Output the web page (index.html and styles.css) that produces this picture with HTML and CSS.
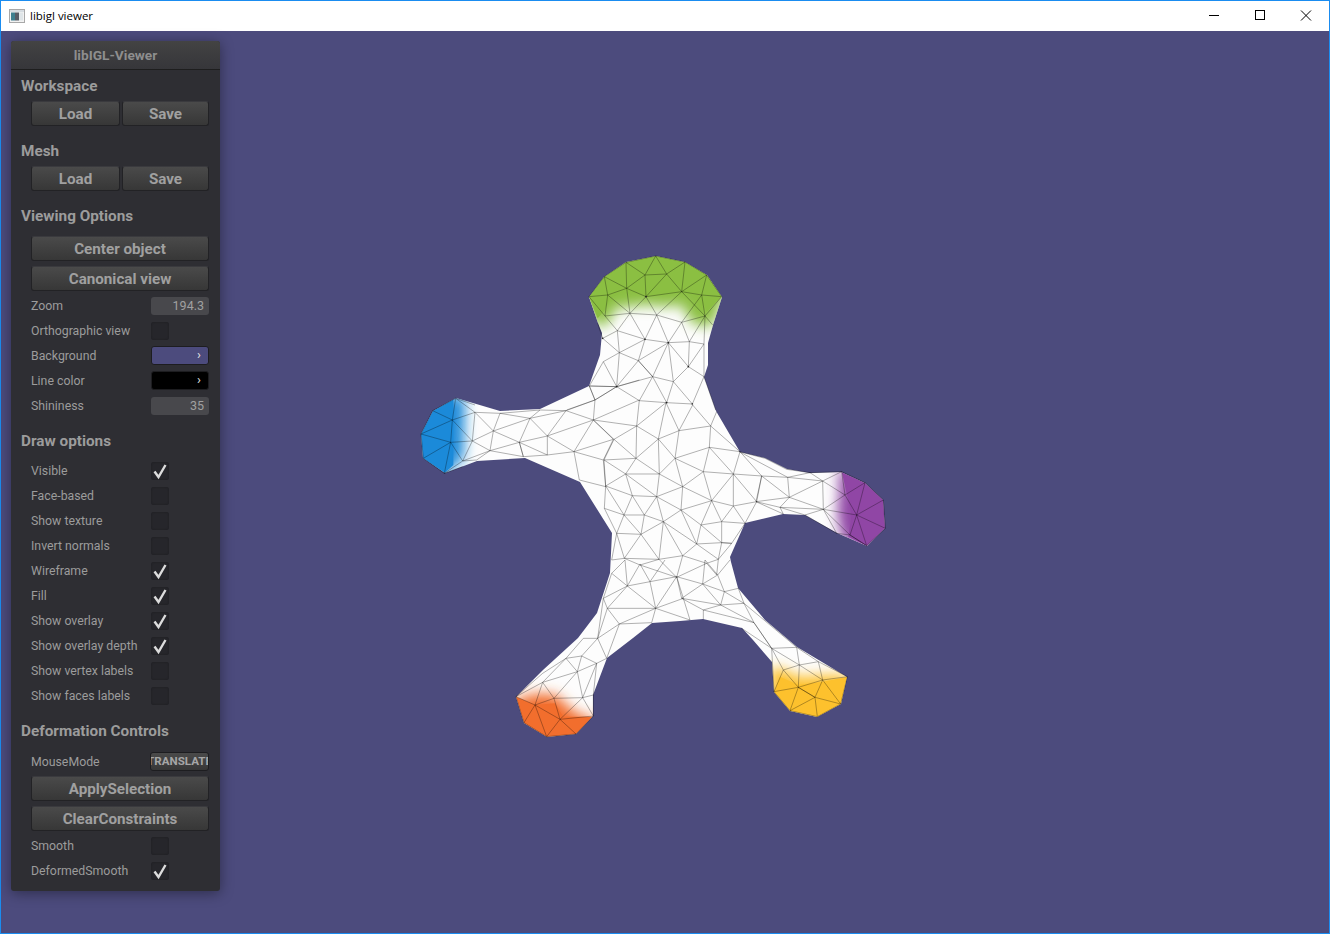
FILE: index.html
```html
<!DOCTYPE html>
<html lang="en">
<head>
<meta charset="utf-8">
<title>libigl viewer</title>
<link rel="stylesheet" href="styles.css">
</head>
<body>
<div class="window">
  <header class="titlebar">
    <svg class="app-icon" width="16" height="14" viewBox="0 0 16 14">
      <rect x="0.5" y="0.5" width="15" height="13" fill="#f2f2f2" stroke="#a8a8a8"/>
      <rect x="1" y="1" width="14" height="2" fill="#d6dce1"/>
      <rect x="2" y="3.500" width="4" height="8" fill="#3d7f8f"/>
      <rect x="6" y="3.500" width="4" height="8" fill="#565c66"/>
      <rect x="10" y="3.500" width="4" height="8" fill="#dfe5e8"/>
    </svg>
    <span class="app-title">libigl viewer</span>
    <div class="window-controls">
      <svg class="win-btn" width="46" height="30" viewBox="0 0 46 30"><path class="win-glyph" d="M18 14.500H28"/></svg>
      <svg class="win-btn" width="46" height="30" viewBox="0 0 46 30"><rect class="win-glyph" x="18.500" y="9.500" width="9" height="9"/></svg>
      <svg class="win-btn" width="46" height="30" viewBox="0 0 46 30"><path class="win-glyph" d="M18 9.500L28 19.500M28 9.500L18 19.500"/></svg>
    </div>
  </header>
  <main class="viewport">
    <svg class="mesh" width="1330" height="934" viewBox="0 0 1330 934">
      <defs>
        <clipPath id="body-clip">
          <polygon points="656,256 685,262 707,275 722,297 713,325 708,343 708,365 704,377 716,411 740,452 765,458 787,469 810,473 841,472 865,483 883,500 885,528 867,546 837,533 805,515 783,514 745,523 730,557 731,562 738,588 765,620 797,647 847,677 841,704 817,717 790,711 774,692 772,662 753,640 742,628 703,619 680,621 652,623 633,638 607,658 593,695 593,716 576,734 547,737 524,723 516,697 543,670 578,638 597,613 610,573 612,533 580,482 525,458 477,461 445,473 423,458 421,434 433,411 456,398 500,411 540,409 589,386 600,355 602,333 598,323 589,297 604,277 626,262"/>
        </clipPath>
        <filter id="soft" x="-40%" y="-40%" width="180%" height="180%"><feGaussianBlur stdDeviation="19"/></filter>
      </defs>
      <polygon class="skin" points="656,256 685,262 707,275 722,297 713,325 708,343 708,365 704,377 716,411 740,452 765,458 787,469 810,473 841,472 865,483 883,500 885,528 867,546 837,533 805,515 783,514 745,523 730,557 731,562 738,588 765,620 797,647 847,677 841,704 817,717 790,711 774,692 772,662 753,640 742,628 703,619 680,621 652,623 633,638 607,658 593,695 593,716 576,734 547,737 524,723 516,697 543,670 578,638 597,613 610,573 612,533 580,482 525,458 477,461 445,473 423,458 421,434 433,411 456,398 500,411 540,409 589,386 600,355 602,333 598,323 589,297 604,277 626,262"/>
      <g clip-path="url(#body-clip)">
        <g transform="translate(560 240) scale(.33333)">
          <polygon class="green" filter="url(#soft)" points="70,150 100,255 145,255 165,205 258,195 320,200 365,195 395,250 455,262 500,150 440,80 287,30 130,90"/>
          <polygon class="green" points="87,170 113,235 135,210 150,175 200,150 258,170 365,155 425,170 440,215 485,170 440,105 375,66 287,48 198,67 133,110"/>
        </g>
        <g transform="translate(410 380) scale(.33333)">
          <polygon class="blue" filter="url(#soft)" points="137,40 165,60 160,235 120,270 103,290 20,240 20,160 60,80"/>
          <polygon class="blue" points="137,55 68,92 33,162 40,235 103,280 130,255 130,60"/>
        </g>
        <g transform="translate(690 400) scale(.33333)">
          <polygon class="purple" filter="url(#soft)" points="445,205 600,290 600,400 530,450 455,420 442,340 448,270"/>
          <polygon class="purple" points="455,215 525,248 580,300 586,385 530,437 475,410 485,345 470,280"/>
        </g>
        <g transform="translate(500 560) scale(.33333)">
          <polygon class="orange" filter="url(#soft)" points="40,420 110,400 170,405 205,440 240,465 290,475 228,535 140,540 60,500"/>
          <polygon class="orange" points="48,410 72,488 140,530 228,522 280,470 190,470 165,430 105,435"/>
        </g>
        <g transform="translate(680 560) scale(.33333)">
          <polygon class="yellow" filter="url(#soft)" points="270,400 270,325 305,325 355,350 430,345 510,345 490,440 412,480 330,460"/>
          <polygon class="yellow" points="282,395 330,452 412,470 482,432 502,350 428,365 355,375 300,350"/>
        </g>
      </g>
      <g transform="translate(560 240) scale(.33333)">
        <path class="edges" d="M287 48 375 66 440 105 485 170 435 228 425 165 365 155 320 102 255 105 200 145 258 170 365 155M87 170 133 110 198 67 287 48 255 105 198 67 200 145 133 110 143 165 200 145M287 48 320 102 375 66 365 155M258 170 320 102M258 170 255 105M365 155 440 105 425 165 485 170M87 170 143 165 210 220 200 145M143 165 135 228 87 170M258 170 210 220M258 170 290 225 365 155M135 228 210 220 290 225 365 247 435 228M365 247 425 165M365 155 435 228M435 228 458 255M135 228 172 272 210 220 255 298 290 225 325 308 365 247 388 305 435 228 432 312 388 305 325 308 255 298 172 272 128 295 178 338 172 272M178 338 255 298 235 362 325 308 385 380 388 305M432 312 385 380 432 410 432 312M178 338 235 362 278 410 325 308 340 425 385 380M278 410 340 425M178 338 130 365 170 440 178 338M235 362 170 440 278 410M130 365 88 438 170 440M235 362 278 410M340 425 397 492 432 410 467 510M278 410 320 488 340 425M278 410 238 482 170 440 105 480 88 438M238 482 320 488 397 492M105 480 20 510M128 295 113 250"/>
      </g>
      <g transform="translate(590 400) scale(.33333)">
        <path class="edges" d="M10 60 148 0 140 78 10 60 72 118 140 78 228 8 205 117 140 78 138 175 72 118 42 180 138 175 205 117 267 92 228 8M308 15 267 92 362 78 308 15M380 35 362 78 450 155 358 142 362 78M205 117 255 175 267 92M255 175 358 142 340 215 255 175 208 222 205 117M138 175 107 222 42 180 47 258 107 222 208 222 138 175M358 142 430 222 450 155 515 228 430 222 340 215M515 228 500 305 430 222 430 318 500 305 465 370 430 318 365 302 430 222M340 215 365 302 278 260 340 215M255 175 278 260 208 222 200 290 107 222 127 287 47 258 43 325 102 345 47 258M127 287 102 345 163 345 127 287 200 290 278 260M200 290 163 345 220 365 200 290 273 330 278 260M365 302 273 330 220 365 320 432 273 330 333 375 365 302 395 365 430 318M333 375 395 365 465 370 425 430 395 428 395 365M333 375 320 432 395 428 333 375M163 345 153 403 102 345 80 400 43 325M80 400 153 403 220 365 207 478 153 403 103 475 80 400 65 480 103 475 207 478 150 495 103 475M220 365 278 467 320 432 385 478 395 428 425 430 385 478 350 490 278 467 207 478 260 532 278 467M150 495 260 532 350 490 380 525 385 478"/>
      </g>
      <g transform="translate(410 380) scale(.33333)">
        <path class="edges" d="M137 55 68 92 33 162 40 235 103 280 158 243 122 187 127 120 137 55 195 97 127 120 68 92M33 162 127 120M33 162 122 187 40 235M122 187 103 280M127 120 187 183 195 97 250 153 187 183 158 243 240 212 187 183M122 187 187 183M195 97 270 100 250 153 360 115 270 100 390 90 360 115M250 153 240 212 328 187 250 153M328 187 360 115 412 168 328 187 340 230 240 212M360 115 468 92 412 168 412 225 340 230 328 187 412 225 492 215 412 168 550 120 468 92 555 60 550 120 492 215 610 178 550 120M555 60 538 18 620 20 555 60M620 20 688 0M158 243 200 240M240 212 200 240M468 92 390 90M492 215 580 240 610 178M492 215 508 300 587 320 580 240M137 55 195 75M103 280 158 260"/>
      </g>
      <g transform="translate(690 400) scale(.33333)">
        <path class="edges" d="M148 155 293 232 215 228 298 292 198 305 215 228M293 232 298 292 398 243 293 232 360 218 398 243 455 215 465 285 398 243 400 328 298 292 270 322 198 305 280 342 270 322 345 345 400 328 270 322M400 328 465 285 525 248 455 215M465 285 500 345 525 248M500 345 580 300M500 345 586 385M500 345 530 437 480 405 500 345 400 328 480 405M345 345 440 400 480 405 530 437 586 385 580 300 525 248M400 328 440 400M148 155 225 175 290 208 360 218 455 215"/>
      </g>
      <g transform="translate(500 560) scale(.33333)">
        <path class="edges" d="M48 410 105 435 72 488 48 410 128 367 105 435 140 530 180 478 105 435 162 415 180 478 228 522 280 468 180 478 248 413 280 468 280 405 248 413 232 335 162 415 248 413M162 415 128 367 232 335 198 295 128 367M232 335 245 288 198 295 250 235 293 235 245 288 290 310 232 335M290 310 248 413M290 310 320 295 293 235 358 192 320 295M293 235 322 145 358 192 467 145 322 145 382 78 467 145 450 65 382 78 375 0M450 65 420 12 382 78M450 65 530 50 467 145 550 115 530 50M450 65 495 0M293 235 310 115 322 145M310 115 382 78 335 40 310 115M335 40 375 0M358 192 455 188 467 145 570 180 550 115M140 530 228 522M72 488 140 530M48 410 128 340 198 295M280 405 290 310"/>
      </g>
      <g transform="translate(680 560) scale(.33333)">
        <path class="edges" d="M-10 50 68 72 5 115 70 150 122 135 68 72 133 95 113 45 68 72 75 0M5 115 122 135 133 95 192 130 222 188 122 135 192 130M113 45 75 0M113 45 150 0M133 95 175 85 192 130M70 150 222 188 275 265 350 262 358 315 275 265 222 188M70 150 70 178M275 265 310 330 358 315 428 360 415 305 358 315M350 262 415 305 502 350 428 360 482 432 502 350M275 265 282 395 310 330 355 382 358 315M355 382 428 360 405 412 355 382 282 395 330 452 355 382 405 412 330 452 412 470 405 412 482 432 412 470M-10 50 5 115M192 130 350 262M185 205 275 265"/>
      </g>
      <g class="dots" transform="translate(560 240) scale(.33333)">
        <circle cx="258" cy="170" r="2.500"/><circle cx="255" cy="298" r="2.500"/><circle cx="325" cy="308" r="2.500"/><circle cx="385" cy="380" r="2.500"/><circle cx="170" cy="440" r="2.500"/><circle cx="320" cy="488" r="2.500"/><circle cx="397" cy="492" r="2.500"/><circle cx="128" cy="295" r="2.500"/>
      </g>
    </svg>
    <aside class="panel">
      <h1 class="panel-title">libIGL-Viewer</h1>
      <div class="panel-body">
        <h2 class="group-head">Workspace</h2>
        <div class="btn-pair"><button class="btn">Load</button><button class="btn">Save</button></div>
        <h2 class="group-head group-gap">Mesh</h2>
        <div class="btn-pair"><button class="btn">Load</button><button class="btn">Save</button></div>
        <h2 class="group-head group-gap">Viewing Options</h2>
        <button class="btn wide first">Center object</button>
        <button class="btn wide next">Canonical view</button>
        <div class="rows after-btn">
          <div class="row"><span class="label">Zoom</span><span class="num">194.3</span></div>
          <div class="row"><span class="label">Orthographic view</span><span class="check"></span></div>
          <div class="row"><span class="label">Background</span><span class="swatch bg-swatch"><i class="chev">›</i></span></div>
          <div class="row"><span class="label">Line color</span><span class="swatch line-swatch"><i class="chev">›</i></span></div>
          <div class="row"><span class="label">Shininess</span><span class="num">35</span></div>
        </div>
        <h2 class="group-head rows-gap">Draw options</h2>
        <div class="rows after-head">
          <div class="row"><span class="label">Visible</span><span class="check"><svg class="tick" viewBox="0 0 18 18"><path d="M3.500 9.500 7.500 15 14.500 3"/></svg></span></div>
          <div class="row"><span class="label">Face-based</span><span class="check"></span></div>
          <div class="row"><span class="label">Show texture</span><span class="check"></span></div>
          <div class="row"><span class="label">Invert normals</span><span class="check"></span></div>
          <div class="row"><span class="label">Wireframe</span><span class="check"><svg class="tick" viewBox="0 0 18 18"><path d="M3.500 9.500 7.500 15 14.500 3"/></svg></span></div>
          <div class="row"><span class="label">Fill</span><span class="check"><svg class="tick" viewBox="0 0 18 18"><path d="M3.500 9.500 7.500 15 14.500 3"/></svg></span></div>
          <div class="row"><span class="label">Show overlay</span><span class="check"><svg class="tick" viewBox="0 0 18 18"><path d="M3.500 9.500 7.500 15 14.500 3"/></svg></span></div>
          <div class="row"><span class="label">Show overlay depth</span><span class="check"><svg class="tick" viewBox="0 0 18 18"><path d="M3.500 9.500 7.500 15 14.500 3"/></svg></span></div>
          <div class="row"><span class="label">Show vertex labels</span><span class="check"></span></div>
          <div class="row"><span class="label">Show faces labels</span><span class="check"></span></div>
        </div>
        <h2 class="group-head rows-gap">Deformation Controls</h2>
        <div class="rows after-head-wide">
          <div class="row"><span class="label">MouseMode</span><span class="combo"><span class="combo-text">TRANSLATE</span></span></div>
        </div>
        <button class="btn wide after-row">ApplySelection</button>
        <button class="btn wide next">ClearConstraints</button>
        <div class="rows after-btn">
          <div class="row"><span class="label">Smooth</span><span class="check"></span></div>
          <div class="row"><span class="label">DeformedSmooth</span><span class="check"><svg class="tick" viewBox="0 0 18 18"><path d="M3.500 9.500 7.500 15 14.500 3"/></svg></span></div>
        </div>
      </div>
    </aside>
  </main>
</div>
</body>
</html>
```
FILE: styles.css
```css
* { box-sizing: border-box; }
html, body { margin: 0; padding: 0; }
body { width: 1330px; height: 934px; overflow: hidden; font-family: Roboto, "Liberation Sans", sans-serif; }
.window { display: flex; flex-direction: column; width: 1330px; height: 934px; border: 1px solid #1a8cf0; position: relative; background: #4c4b7d; }
.titlebar { flex: 0 0 30px; display: flex; align-items: center; background: #fff; padding-left: 8px; }
.app-icon { flex: none; }
.app-title { margin: -2px 0 0 5px; font: 11.500px "Open Sans", "Noto Sans", sans-serif; color: #000; }
.window-controls { margin-left: auto; display: flex; }
.win-btn { display: block; }
.win-glyph { fill: none; stroke: #000; stroke-width: 1; }
.viewport { flex: 1; position: relative; padding: 10px; background: #4c4b7d; }
.mesh { position: absolute; left: -1px; top: -31px; }
.skin { fill: #fdfdfd; }
.green { fill: #8bbf42; }
.blue { fill: #1b8ad9; }
.purple { fill: #9046a5; }
.orange { fill: #f26e2d; }
.yellow { fill: #fdc12d; }
.edges { fill: none; stroke: #000; stroke-opacity: .38; stroke-width: .8; stroke-linejoin: round; vector-effect: non-scaling-stroke; }
.dots circle { fill: #222; }
.panel { position: relative; width: 209px; height: 850px; background: #2e2e33; border-radius: 3px; box-shadow: 0 2px 14px rgba(0,0,0,.4); display: flex; flex-direction: column; }
.panel-title { flex: 0 0 29px; margin: 0; display: flex; align-items: center; justify-content: center; font-size: 13.700px; font-weight: 700; color: #8e8e8e; background: linear-gradient(#434343, #36363a); border-bottom: 1px solid #1e1e1e; border-radius: 3px 3px 0 0; }
.panel-body { padding: 4px 10px 0 10px; display: flex; flex-direction: column; }
.group-head { margin: 0; height: 24px; line-height: 25px; font-size: 15.300px; font-weight: 700; color: #9c9c9c; }
.group-gap { margin-top: 13px; }
.rows-gap { margin-top: 11px; }
.btn-pair { margin: 3px 0 0 10px; display: flex; gap: 2px; }
.btn-pair .btn:first-child { width: 89px; }
.btn-pair .btn:last-child { width: 87px; }
.btn { height: 25px; padding: 0; font-family: inherit; font-size: 15.200px; font-weight: 700; color: #a0a0a0; background: linear-gradient(#4a4a4a, #373737); border: 1px solid #222225; border-top-color: #3a3a3e; border-radius: 3px; }
.wide { margin-left: 10px; width: 178px; }
.first { margin-top: 8px; }
.next { margin-top: 5px; }
.after-btn { margin-top: 2px; }
.after-head { margin-top: 5px; }
.after-head-wide { margin-top: 6px; }
.after-row { margin-top: 2px; }
.rows { display: flex; flex-direction: column; }
.row { height: 25px; margin-left: 10px; width: 178px; display: flex; align-items: center; justify-content: space-between; }
.label { font-size: 12.300px; color: #9c9c9c; }
.num { width: 58px; height: 18px; line-height: 18px; padding-right: 5px; text-align: right; font-size: 12.500px; color: #a0a0a0; background: #48484c; border-radius: 3px; }
.check { display: block; width: 18px; height: 18px; margin-right: 40px; background: #26262b; border-radius: 3px; box-shadow: inset 0 0 2px #1c1c1f; }
.tick { display: block; width: 18px; height: 18px; }
.tick path { fill: none; stroke: #dcdcdc; stroke-width: 2.400; stroke-linejoin: miter; }
.swatch { display: flex; align-items: center; justify-content: flex-end; width: 58px; height: 19px; padding: 0 7px 3px 0; border: 1px solid #1d1d20; border-radius: 3px; }
.bg-swatch { background: #4c4b7d; }
.line-swatch { background: #000; }
.chev { font-style: normal; font-size: 13px; line-height: 13px; color: #e4e4e4; }
.combo { display: flex; justify-content: center; width: 59px; height: 19px; overflow: hidden; background: linear-gradient(#4a4a4a, #373737); border: 1px solid #1d1d20; border-radius: 3px; }
.combo-text { flex: none; font-size: 11.600px; line-height: 17px; font-weight: 700; color: #a6a6a6; }
```
